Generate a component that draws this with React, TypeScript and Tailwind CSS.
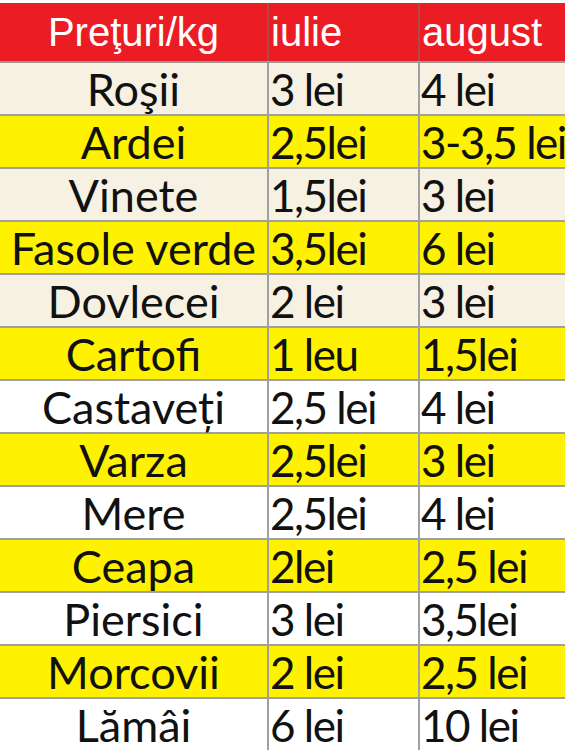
const rows = [
  { name: "Roşii", jul: "3 lei", aug: "4 lei", bg: "bg-[#f6f1e2]" },
  { name: "Ardei", jul: "2,5lei", aug: "3-3,5 lei", bg: "bg-[#fff200]" },
  { name: "Vinete", jul: "1,5lei", aug: "3 lei", bg: "bg-[#f6f1e2]" },
  { name: "Fasole verde", jul: "3,5lei", aug: "6 lei", bg: "bg-[#fff200]" },
  { name: "Dovlecei", jul: "2 lei", aug: "3 lei", bg: "bg-[#f6f1e2]" },
  { name: "Cartofi", jul: "1 leu", aug: "1,5lei", bg: "bg-[#fff200]" },
  { name: "Castaveți", jul: "2,5 lei", aug: "4 lei", bg: "bg-white" },
  { name: "Varza", jul: "2,5lei", aug: "3 lei", bg: "bg-[#fff200]" },
  { name: "Mere", jul: "2,5lei", aug: "4 lei", bg: "bg-white" },
  { name: "Ceapa", jul: "2lei", aug: "2,5 lei", bg: "bg-[#fff200]" },
  { name: "Piersici", jul: "3 lei", aug: "3,5lei", bg: "bg-white" },
  { name: "Morcovii", jul: "2 lei", aug: "2,5 lei", bg: "bg-[#fff200]" },
  { name: "Lămâi", jul: "6 lei", aug: "10 lei", bg: "bg-white" },
];

export default function App() {
  return (
    <div className="h-[750px] w-[569px] overflow-hidden bg-white pt-[3px]">
      <div className="w-[565px]">
        <div className="flex h-[60px] border-b-2 border-[#9a9a9a] bg-[#ec1c24] font-['Liberation_Sans_Narrow','Liberation_Sans',sans-serif] text-[40px] leading-[58px] text-white">
          <div className="flex w-[269px] items-center justify-center border-r-2 border-[#b04a4a]">
            Preţuri/kg
          </div>
          <div className="flex w-[151px] items-center border-r-2 border-[#b04a4a] pl-[2px]">
            iulie
          </div>
          <div className="flex w-[145px] items-center pl-[2px]">august</div>
        </div>
        {rows.map((r, i) => (
          <div
            key={r.name}
            className={`flex font-['Lato',sans-serif] leading-[49px] text-[#111] ${r.bg} ${
              i < rows.length - 1 ? "h-[53px] border-b-2 border-[#a0a0a0]" : "h-[51px]"
            }`}
          >
            <div className="flex w-[269px] items-center justify-center whitespace-nowrap border-r-2 border-[#a0a0a0] pt-[2px] text-[45px]">
              {r.name}
            </div>
            <div className="flex w-[151px] items-center whitespace-nowrap border-r-2 border-[#a0a0a0] pl-[1px] pt-[2px] text-[44px] tracking-[-1.5px]">
              {r.jul}
            </div>
            <div className="flex w-[145px] items-center whitespace-nowrap pl-[1px] pt-[2px] text-[44px] tracking-[-1.5px]">
              {r.aug}
            </div>
          </div>
        ))}
      </div>
    </div>
  );
}
